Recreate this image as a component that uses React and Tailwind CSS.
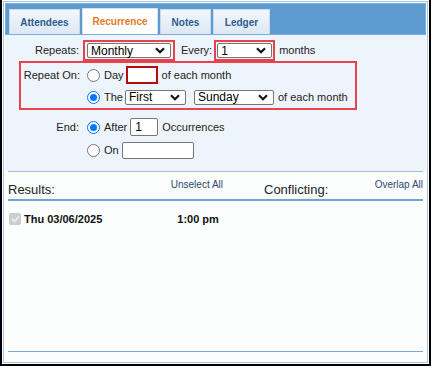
import React from 'react';

const Chevron = () => (
    <svg width="10" height="7" viewBox="0 0 10 7" className="shrink-0">
        <path d="M1 1.2 L5 5.2 L9 1.2" fill="none" stroke="#111" strokeWidth="2.2" />
    </svg>
);

const FakeSelect = ({ value, className }) => (
    <div className={`flex items-center justify-between bg-white border border-[#767676] rounded-[2px] pl-[3px] pr-[5px] text-[12px] leading-none text-black ${className}`}>
        <span>{value}</span>
        <Chevron />
    </div>
);

const Radio = ({ checked }) => (
    <span className={`inline-flex items-center justify-center w-[13px] h-[13px] rounded-full border shrink-0 ${checked ? 'border-[#0075ff] bg-white' : 'border-[#767676] bg-white'}`}>
        {checked && <span className="w-[7px] h-[7px] rounded-full bg-[#0075ff]" />}
    </span>
);

const Tab = ({ label, active, width }) => (
    <div
        className={`${width} flex items-center justify-center border border-b-0 text-[10px] font-bold ${
            active
                ? 'bg-white border-[#d6e4f2] text-[#e8791e] h-[26px] pb-px'
                : 'bg-gradient-to-b from-[#f2f7fc] to-[#dce8f4] border-[#c6daee] text-[#2d5c8f] h-[25px]'
        }`}
    >
        {label}
    </div>
);

export default function App() {
    return (
        <div
            className="w-[431px] h-[366px] bg-white border-l-2 border-r-2 border-b-2 border-black pt-px px-px pb-px whitespace-nowrap"
            style={{ fontFamily: '"Liberation Sans", Arial, sans-serif' }}
        >
            <div className="h-full border border-[#a9c5e1] flex flex-col p-px">
                {/* tab strip */}
                <div className="h-[32px] bg-[#5d9bd1] border border-[#78addc] flex items-end gap-[2px] pl-[3px] shrink-0">
                    <Tab label="Attendees" width="w-[71px]" />
                    <Tab label="Recurrence" width="w-[76px]" active />
                    <Tab label="Notes" width="w-[51px]" />
                    <Tab label="Ledger" width="w-[57px]" />
                </div>

                {/* recurrence form */}
                <div className="bg-[#eef4fb] h-[136px] shrink-0 pt-[5px] text-[11px] text-[#222]">
                    <div className="flex items-center">
                        <div className="w-[78px] text-right pr-[4px]">Repeats:</div>
                        <div className="border-2 border-[#e8434d] px-[2px] py-[1px]">
                            <FakeSelect value="Monthly" className="w-[84px] h-[15px]" />
                        </div>
                        <div className="ml-[6px] mr-[2px]">Every:</div>
                        <div className="border-2 border-[#e8434d] px-[1px] py-[1px]">
                            <FakeSelect value="1" className="w-[55px] h-[15px]" />
                        </div>
                        <div className="ml-[4px]">months</div>
                    </div>

                    <div className="ml-[14px] w-[338px] border-2 border-[#e8434d] pt-[3px] pb-[2px] flex">
                        <div className="w-[66px] text-right pr-[7px] leading-[18px]">Repeat On:</div>
                        <div className="flex flex-col gap-[4px]">
                            <div className="flex items-center h-[18px]">
                                <Radio />
                                <span className="ml-[4px]">Day</span>
                                <div className="ml-[2px] w-[32px] h-[18px] border-2 border-[#b50c0c] bg-white" />
                                <span className="ml-[4px]">of each month</span>
                            </div>
                            <div className="flex items-center h-[18px]">
                                <Radio checked />
                                <span className="ml-[4px]">The</span>
                                <FakeSelect value="First" className="ml-[2px] w-[61px] h-[15px]" />
                                <FakeSelect value="Sunday" className="ml-[8px] w-[80px] h-[15px]" />
                                <span className="ml-[4px]">of each month</span>
                            </div>
                        </div>
                    </div>

                    <div className="flex mt-[8px]">
                        <div className="w-[82px] text-right pr-[8px] leading-[18px]">End:</div>
                        <div className="flex flex-col gap-[6px]">
                            <div className="flex items-center h-[18px]">
                                <Radio checked />
                                <span className="ml-[4px]">After</span>
                                <div className="ml-[3px] w-[28px] h-[18px] border border-[#767676] rounded-[2px] bg-white pl-[4px] leading-[16px] text-[12px] text-black">1</div>
                                <span className="ml-[4px]">Occurrences</span>
                            </div>
                            <div className="flex items-center h-[17px]">
                                <Radio />
                                <span className="ml-[4px]">On</span>
                                <div className="ml-[3px] w-[72px] h-[17px] border border-[#767676] rounded-[2px] bg-white" />
                            </div>
                        </div>
                    </div>
                </div>

                {/* results */}
                <div className="flex-1 bg-[#fcfefe] px-[3px] flex flex-col">
                    <div className="h-px bg-[#9dbfe0]" />
                    <div className="flex mt-[7px] h-[18px]">
                        <div className="w-[215px] flex justify-between items-start">
                            <span className="text-[13px] leading-none text-[#222] pt-[4px]">Results:</span>
                            <span className="text-[10px] leading-none text-[#2b4a70] pt-px">Unselect All</span>
                        </div>
                        <div className="ml-[41px] flex-1 flex justify-between items-start">
                            <span className="text-[13px] leading-none text-[#222] pt-[4px]">Conflicting:</span>
                            <span className="text-[10px] leading-none text-[#2b4a70] pt-px">Overlap All</span>
                        </div>
                    </div>
                    <div className="h-[2px] bg-[#6fa3d2] mt-[2px]" />
                    <div className="flex items-center mt-[10px] text-[11px] font-bold text-[#111]">
                        <span className="ml-px w-[12px] h-[12px] rounded-[2px] bg-[#cdcdcd] flex items-center justify-center">
                            <svg width="9" height="8" viewBox="0 0 9 8">
                                <path d="M1 4 L3.5 6.5 L8 1.5" fill="none" stroke="#eee" strokeWidth="1.8" />
                            </svg>
                        </span>
                        <span className="ml-[3px]">Thu 03/06/2025</span>
                        <span className="ml-[75px]">1:00 pm</span>
                    </div>
                    <div className="flex-1" />
                    <div className="h-px bg-[#7ea7cd] mb-[9px]" />
                </div>
            </div>
        </div>
    );
}
